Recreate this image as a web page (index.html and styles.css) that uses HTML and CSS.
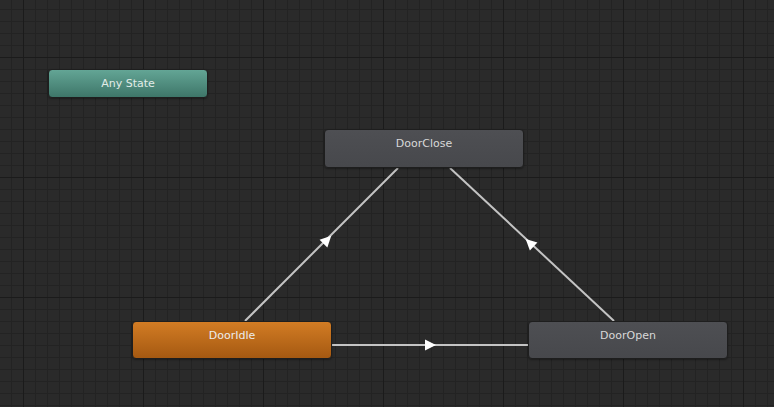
FILE: index.html
```html
<!DOCTYPE html>
<html>
<head>
<meta charset="utf-8">
<link rel="stylesheet" href="styles.css">
</head>
<body>
<div class="graph">
  <svg class="edges" width="774" height="407" viewBox="0 0 774 407">
    <g stroke="#c4c4c4" stroke-width="2" fill="none">
      <line x1="245" y1="321" x2="398" y2="168"/>
      <line x1="614" y1="321" x2="450" y2="168"/>
      <line x1="332" y1="345" x2="528" y2="345"/>
    </g>
    <g fill="#ffffff">
      <polygon points="-5,-5.5 6,0 -5,5.5" transform="translate(327,240) rotate(-45)"/>
      <polygon points="-5,-5.5 6,0 -5,5.5" transform="translate(530,243) rotate(-137)"/>
      <polygon points="-5,-5.5 6,0 -5,5.5" transform="translate(430,345)"/>
    </g>
  </svg>
  <div class="node any" style="left:48px;top:69px;width:160px;height:29px;">Any State</div>
  <div class="node state" style="left:324px;top:129px;width:200px;height:39px;">DoorClose</div>
  <div class="node state default" style="left:132px;top:321px;width:200px;height:38px;">DoorIdle</div>
  <div class="node state" style="left:528px;top:321px;width:200px;height:38px;">DoorOpen</div>
</div>
</body>
</html>
```
FILE: styles.css
```css
html, body {
  margin: 0;
  padding: 0;
  width: 774px;
  height: 407px;
  overflow: hidden;
}
body {
  background-color: #2a2a2a;
  font-family: "DejaVu Sans", "Liberation Sans", sans-serif;
}
.graph {
  position: relative;
  width: 774px;
  height: 407px;
  background-color: #2a2a2a;
  background-image:
    linear-gradient(to right, #1b1b1b 1px, transparent 1px),
    linear-gradient(to bottom, #1b1b1b 1px, transparent 1px),
    linear-gradient(to right, #232323 1px, transparent 1px),
    linear-gradient(to bottom, #232323 1px, transparent 1px);
  background-size: 120px 120px, 120px 120px, 12px 12px, 12px 12px;
  background-position: 23px 57px, 23px 57px, 11px 9px, 11px 9px;
}
.edges {
  position: absolute;
  left: 0;
  top: 0;
}
.node {
  position: absolute;
  box-sizing: border-box;
  border-radius: 4px;
  border: 1px solid #1e1e1e;
  font-size: 11px;
  line-height: 14px;
  text-align: center;
  color: #d8d8d8;
  box-shadow: 0 1px 2px rgba(0,0,0,0.35);
}
.node.state {
  padding-top: 7px;
  background: linear-gradient(to bottom, #4e4f53, #47484c);
}
.node.default {
  background: linear-gradient(to bottom, #d27c24, #a55912);
  color: #ececec;
}
.node.any {
  padding-top: 7px;
  background: linear-gradient(to bottom, #63a595, #3e7669);
  color: #e2ece8;
}
```
